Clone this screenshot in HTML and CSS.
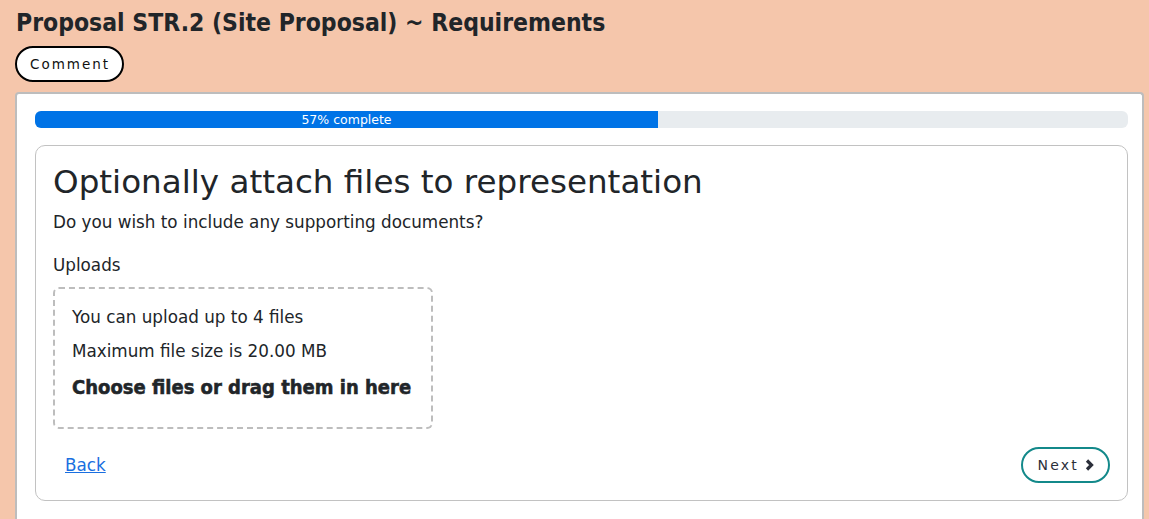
FILE: index.html
```html
<!DOCTYPE html>
<html lang="en">
<head>
  <meta charset="UTF-8" />
  <meta name="viewport" content="width=device-width, initial-scale=1.0" />
  <title>Proposal STR.2 ~ Requirements</title>
  <link rel="stylesheet" href="styles.css">
</head>
<body>

<div class="page">
  <h1 class="page-title">Proposal STR.2 (Site Proposal) ~ Requirements</h1>
  <button class="comment-btn">Comment</button>

  <div class="wizard">
    <!-- progress -->
    <div class="progress">
      <div class="progress-bar" style="width: 57%">57% complete</div>
    </div>

    <div class="step-card">
      <h2 class="step-title">Optionally attach files to representation</h2>
      <p class="step-hint">Do you wish to include any supporting documents?</p>

      <label class="field-label">Uploads</label>
      <div class="dropzone">
        <p>You can upload up to 4 files</p>
        <p>Maximum file size is 20.00 MB</p>
        <p class="dropzone-cta">Choose files or drag them in here</p>
      </div>

      <div class="step-actions">
        <a href="#" class="back-link">Back</a>
        <button class="next-btn">Next
          <svg width="11" height="12" viewBox="0 0 11 12"><path d="M3 1.5 L7.5 6 L3 10.5" fill="none" stroke="#2b2f3a" stroke-width="3.2" stroke-linejoin="miter"/></svg>
        </button>
      </div>
    </div>
  </div>
</div>

</body>
</html>
```

FILE: styles.css
```css
body {
  font-family: "DejaVu Sans", Verdana, sans-serif;
  background-color: #f5c6ab;
  color: #212529;
  margin: 0;
  padding: 0;
}

.page {
  padding: 6px 5px 0 15px;
}

.page-title {
  font-family: "DejaVu Sans Condensed", "DejaVu Sans", sans-serif;
  font-size: 24.5px;
  font-weight: 700;
  margin: 0 0 6px 1px;
  line-height: 34px;
}

.comment-btn {
  font-family: inherit;
  font-size: 13.5px;
  letter-spacing: 2px;
  background: white;
  color: #111;
  border: 2px solid #000;
  border-radius: 20px;
  padding: 0 12px 0 13px;
  height: 36px;
  cursor: pointer;
}

.wizard {
  background: white;
  margin-top: 10px;
  border: 2px solid #bdbdbd;
  border-bottom: none;
  border-radius: 4px 4px 0 0;
  padding: 17px 14px 30px 18px;
}

.progress {
  background: #e8ecef;
  height: 17px;
  border-radius: 6px;
  overflow: hidden;
}

.progress-bar {
  background: #0073e6;
  color: white;
  height: 100%;
  font-size: 12.5px;
  line-height: 17px;
  text-align: center;
}

.step-card {
  margin-top: 17px;
  border: 1px solid #c2c2c2;
  border-radius: 10px;
  padding: 13px 17px 17px 17px;
}

.step-title {
  font-size: 32.6px;
  font-weight: 400;
  margin: 0;
  line-height: 46px;
}

.step-hint {
  font-size: 16.8px;
  line-height: 24px;
  margin: 5px 0 19px;
}

.field-label {
  display: block;
  font-size: 16.8px;
  line-height: 24px;
  margin-bottom: 10px;
}

.dropzone {
  width: 342px;
  border: 2px dashed #bdbdbd;
  border-radius: 6px;
  padding: 16px 17px 26px;
}

.dropzone p {
  margin: 0 0 10px;
  font-size: 16.8px;
  line-height: 24px;
}

.dropzone .dropzone-cta {
  font-family: "DejaVu Sans Condensed", "DejaVu Sans", sans-serif;
  font-size: 20px;
  line-height: 28px;
  font-weight: 700;
  -webkit-text-stroke: 0.5px #212529;
  margin-bottom: 0;
}

.step-actions {
  display: flex;
  justify-content: space-between;
  align-items: center;
  margin-top: 18px;
  padding-left: 12px;
}

.back-link {
  color: #1a6fe0;
  font-size: 16.8px;
}

.next-btn {
  font-family: inherit;
  font-size: 14px;
  letter-spacing: 2.2px;
  background: white;
  color: #2b2f3a;
  border: 2px solid #13898a;
  border-radius: 20px;
  height: 36px;
  padding: 0 13px 0 15px;
  display: flex;
  align-items: center;
  gap: 5px;
  cursor: pointer;
}
```
